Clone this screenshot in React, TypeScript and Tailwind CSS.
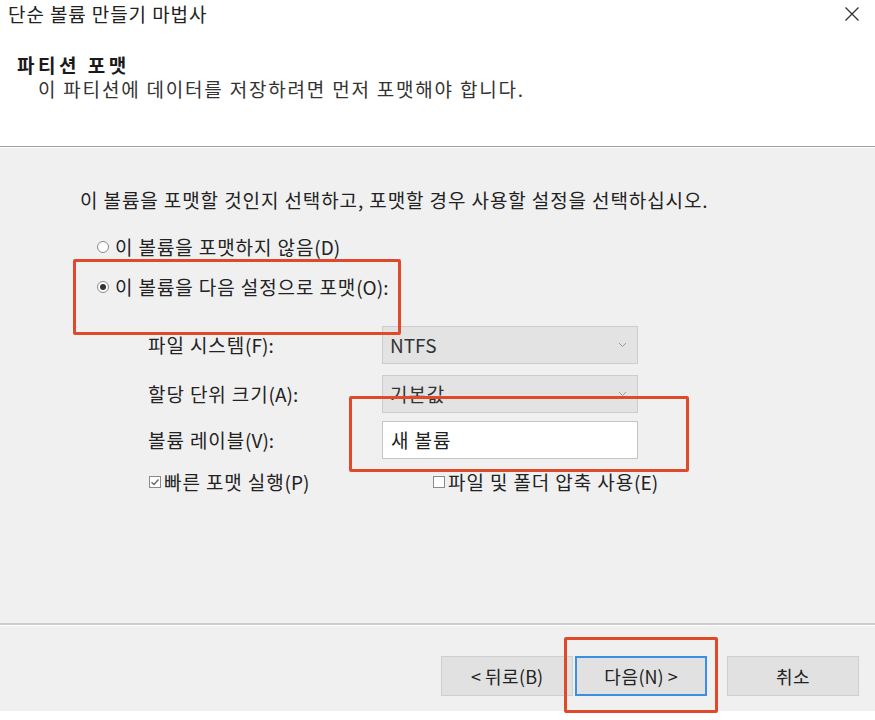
import React from "react";

const font = { fontFamily: '"Noto Sans CJK KR", "Noto Sans", sans-serif' };

function L({ children }: { children: React.ReactNode }) {
  return <span className="tracking-normal">{children}</span>;
}

function Radio({ checked }: { checked?: boolean }) {
  return (
    <span className="w-[12px] h-[12px] rounded-full border border-[#8a8a8a] bg-white flex items-center justify-center shrink-0">
      {checked && <span className="w-[6px] h-[6px] rounded-full bg-[#333333]" />}
    </span>
  );
}

function Check({ checked }: { checked?: boolean }) {
  return (
    <span className="w-[12px] h-[12px] border border-[#8a8a8a] bg-white flex items-center justify-center shrink-0">
      {checked && (
        <svg width="10" height="10" viewBox="0 0 10 10">
          <path d="M1.5 5.2 L4 7.5 L8.5 2.5" fill="none" stroke="#666" strokeWidth="1.3" />
        </svg>
      )}
    </span>
  );
}

function Combo({ children }: { children: React.ReactNode }) {
  return (
    <div className="w-[256px] h-full bg-[#e3e3e3] border border-[#cdcdcd] flex items-center justify-between pl-[7px] pr-[10px] text-[19px] text-[#333]">
      <span>{children}</span>
      <svg width="9" height="6" viewBox="0 0 9 6">
        <path d="M1 1 L4.5 4.5 L8 1" fill="none" stroke="#9a9a9a" strokeWidth="1" />
      </svg>
    </div>
  );
}

function Btn({ children, primary }: { children: React.ReactNode; primary?: boolean }) {
  return (
    <div
      className={
        "w-[132px] h-[40px] bg-[#e1e1e1] flex items-center justify-center text-[18px] tracking-[0.5px] text-[#222] whitespace-pre " +
        (primary ? "border-2 border-[#3c8fe0]" : "border border-[#cfcfcf]")
      }
    >
      {children}
    </div>
  );
}

export default function App() {
  return (
    <div className="relative w-[875px] h-[720px] bg-white overflow-hidden text-[#1a1a1a]" style={font}>
      {/* header */}
      <div className="h-[146px] bg-white flex flex-col">
        <div className="h-[28px] flex items-center justify-between pl-[8px] pr-[15px]">
          <span className="text-[19px] text-[#222] tracking-[0.9px]">단순 볼륨 만들기 마법사</span>
          <svg width="16" height="16" viewBox="0 0 16 16">
            <path d="M1.5 1.5 L14.5 14.5 M14.5 1.5 L1.5 14.5" stroke="#333" strokeWidth="1.3" />
          </svg>
        </div>
        <div className="mt-[24px] pl-[17px] h-[26px] flex items-center text-[19px] font-bold tracking-[3.5px]">파티션 포맷</div>
        <div className="pl-[38px] h-[22px] flex items-center text-[19px] text-[#333] tracking-[1.8px]">
          이 파티션에 데이터를 저장하려면 먼저 포맷해야 합니다.
        </div>
      </div>
      <div className="h-[2px] border-t border-[#a0a0a0] border-b border-b-white" />
      {/* body */}
      <div className="h-[475px] bg-[#f0f0f0] pt-[40px] text-[19px] text-[#222] tracking-[0.9px]">
        <div className="h-[24px] pl-[80px] flex items-center">
          이 볼륨을 포맷할 것인지 선택하고, 포맷할 경우 사용할 설정을 선택하십시오.
        </div>
        <div className="mt-[23px] h-[24px] pl-[97px] flex items-center gap-[6px]">
          <Radio />
          <span>
            이 볼륨을 포맷하지 않음<L>(D)</L>
          </span>
        </div>
        <div className="mt-[16px] h-[24px] pl-[97px] flex items-center gap-[6px]">
          <Radio checked />
          <span>
            이 볼륨을 다음 설정으로 포맷<L>(O):</L>
          </span>
        </div>
        <div className="mt-[27px] pl-[148px] flex flex-col">
          <div className="h-[38px] flex items-center">
            <span className="w-[234px]">
              파일 시스템<L>(F):</L>
            </span>
            <Combo>
              <L>NTFS</L>
            </Combo>
          </div>
          <div className="mt-[11px] h-[38px] flex items-center">
            <span className="w-[234px]">
              할당 단위 크기<L>(A):</L>
            </span>
            <Combo>기본값</Combo>
          </div>
          <div className="mt-[8px] h-[38px] flex items-center">
            <span className="w-[234px]">
              볼륨 레이블<L>(V):</L>
            </span>
            <div className="w-[256px] h-full bg-white border border-[#c4c4c4] flex items-center pl-[8px] text-[19px] text-[#222]">
              새 볼륨
            </div>
          </div>
          <div className="mt-[11px] h-[24px] flex items-center">
            <div className="w-[285px] flex items-center gap-[3px] pl-[1px]">
              <Check checked />
              <span>
                빠른 포맷 실행<L>(P)</L>
              </span>
            </div>
            <div className="flex items-center gap-[3px]">
              <Check />
              <span>
                파일 및 폴더 압축 사용<L>(E)</L>
              </span>
            </div>
          </div>
        </div>
      </div>
      <div className="h-[3px] border-t-2 border-[#cccccc] border-b border-b-white" />
      {/* footer */}
      <div className="h-[85px] bg-[#f0f0f0] flex items-start justify-end pt-[30px] pr-[16px]">
        <Btn>
          <L>{"< "}</L>뒤로<L>(B)</L>
        </Btn>
        <div className="ml-[2px]">
          <Btn primary>
            다음<L>{"(N) >"}</L>
          </Btn>
        </div>
        <div className="ml-[20px]">
          <Btn>취소</Btn>
        </div>
      </div>

      {/* annotation boxes */}
      <div className="absolute left-[73px] top-[259px] w-[328px] h-[76px] border-[3px] border-[#e0492a] rounded-[2px]" />
      <div className="absolute left-[349px] top-[396px] w-[340px] h-[76px] border-[3px] border-[#e0492a] rounded-[2px]" />
      <div className="absolute left-[564px] top-[637px] w-[154px] h-[76px] border-[3px] border-[#e0492a] rounded-[2px]" />
    </div>
  );
}
